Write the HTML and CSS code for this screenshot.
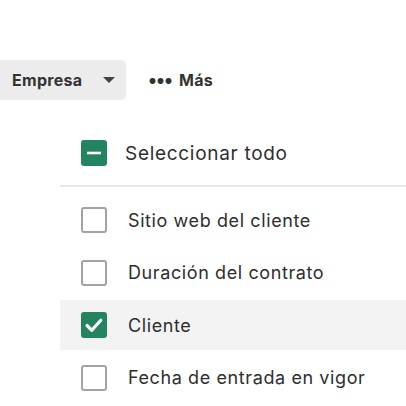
FILE: index.html
```html
<!DOCTYPE html>
<html lang="es">
<head>
    <meta charset="UTF-8">
    <meta name="viewport" content="width=device-width, initial-scale=1.0">
    <title>Columnas</title>
    <link rel="stylesheet" href="styles.css">
</head>
<body>
    <div class="toolbar">
        <button type="button" class="tool-btn filter">
            Empresa
            <span class="caret"></span>
        </button>
        <button type="button" class="tool-btn more">
            <span class="dots">&bull;&bull;&bull;</span>
            Más
        </button>
    </div>

    <div class="menu">
        <label class="option all">
            <span class="box checked">
                <svg viewBox="0 0 26 26" width="26" height="26"><path d="M6 13h14" stroke="#fff" stroke-width="2.6" fill="none"/></svg>
            </span>
            Seleccionar todo
        </label>
        <div class="divider"></div>
        <label class="option">
            <span class="box"></span>
            Sitio web del cliente
        </label>
        <label class="option">
            <span class="box"></span>
            Duración del contrato
        </label>
        <label class="option hover">
            <span class="box checked">
                <svg viewBox="0 0 26 26" width="26" height="26"><path d="M6 13.5l4.8 4.8 9-10" stroke="#fff" stroke-width="3.2" fill="none" stroke-linecap="round" stroke-linejoin="round"/></svg>
            </span>
            Cliente
        </label>
        <label class="option">
            <span class="box"></span>
            Fecha de entrada en vigor
        </label>
    </div>
</body>
</html>
```

FILE: styles.css
```css
body {
    margin: 0;
    font-family: Inter, "Noto Sans", sans-serif;
    color: #2e2e2e;
    background: #fff;
}
.toolbar {
    display: flex;
    align-items: center;
    gap: 22px;
    padding-top: 60px;
}
.tool-btn {
    display: flex;
    align-items: center;
    height: 40px;
    border: none;
    background: none;
    font-family: inherit;
    font-size: 16px;
    font-weight: 700;
    letter-spacing: 0.3px;
    color: #333;
    padding: 0;
}
.filter {
    width: 126px;
    padding-left: 12px;
    background: #ececec;
    border-radius: 0 5px 5px 0;
}
.caret {
    margin-left: 21px;
    width: 0;
    height: 0;
    border-left: 6px solid transparent;
    border-right: 6px solid transparent;
    border-top: 6px solid #444;
}
.dots {
    font-size: 19px;
    letter-spacing: -1px;
    margin-right: 7px;
}
.menu {
    margin-top: 28px;
    margin-left: 60px;
    display: flex;
    flex-direction: column;
    gap: 2.6px;
}
.option {
    display: flex;
    align-items: center;
    height: 50px;
    padding-left: 21px;
    font-size: 18px;
    letter-spacing: 0.6px;
    color: #2e2e2e;
}
.option.all {
    font-size: 19px;
    letter-spacing: 0.7px;
    height: 50px;
    margin-bottom: 4px;
}
.divider {
    height: 2px;
    background: #e8e8e8;
    margin-bottom: 6px;
}
.hover {
    background: #f3f3f3;
}
.box {
    box-sizing: border-box;
    width: 26px;
    height: 26px;
    border: 2px solid #a3a3a3;
    border-radius: 3px;
    margin-right: 21px;
    flex-shrink: 0;
}
.box.checked {
    border: none;
    background: #23855f;
}
.box svg {
    display: block;
}
.all .box {
    margin-right: 18px;
}
```
